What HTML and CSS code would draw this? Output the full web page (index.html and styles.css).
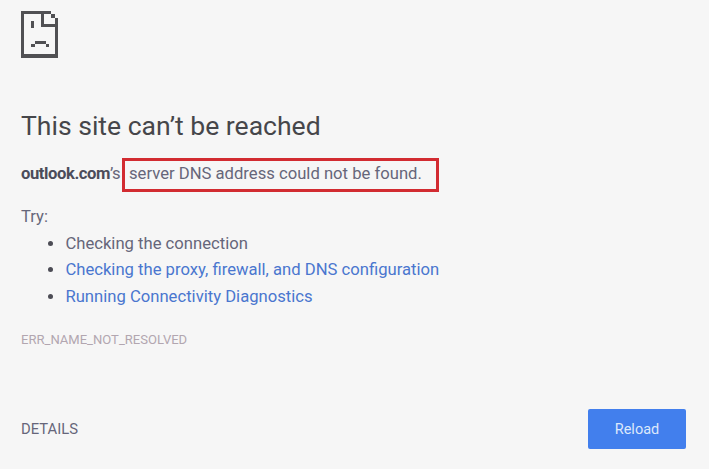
FILE: index.html
```html
<!DOCTYPE html>
<html lang="en">
<head>
<meta charset="utf-8">
<title>outlook.com</title>
<link rel="stylesheet" href="styles.css">
</head>
<body>
<main class="error-page">
<svg class="sad-page" viewBox="0 0 37 47" width="37" height="47" fill="#505053" shape-rendering="crispEdges"><path d="M0 0H30V3H23V13H34V7H37V47H0ZM3 3V43H34V16H20V3ZM30 3H34V7H30ZM10 10H13V17H10ZM14 30H25V33H14ZM10 33H14V36H10ZM25 33H28V36H25Z" fill-rule="evenodd"/></svg>
<h1>This site can’t be reached</h1>
<p class="summary"><span class="host"><strong>outlook.com</strong>’s</span><span class="highlight">server DNS address could not be found.</span></p>
<p class="try">Try:</p>
<ul>
<li>Checking the connection</li>
<li><a href="#">Checking the proxy, firewall, and DNS configuration</a></li>
<li><a href="#">Running Connectivity Diagnostics</a></li>
</ul>
<p class="code">ERR_NAME_NOT_RESOLVED</p>
<footer><a class="details" href="#">DETAILS</a><button>Reload</button></footer>
</main>
</body>
</html>
```
FILE: styles.css
```css
* { box-sizing: border-box; }
body { margin: 0; background: #f6f6f6; color: #66667a; font: 16.65px/26.5px Roboto, sans-serif; }
.error-page { padding: 11px 23px 0 21px; }
.sad-page { display: block; }
h1 { margin: 48px 0 0; font-size: 26.55px; line-height: 40px; font-weight: 400; color: #46464a; }
p { margin: 0; }
.summary { display: flex; align-items: center; margin-top: 12px; height: 34px; }
.host { width: 101px; padding-bottom: 2px; white-space: nowrap; letter-spacing: -0.43px; }
strong { color: #4c4c5a; }
.highlight { width: 317px; height: 34px; padding-left: 4px; border: 3px solid #d22b31; line-height: 25px; white-space: nowrap; }
.try { margin-top: 12px; }
ul { margin: 0; padding-left: 44.4px; }
li::marker { color: #4c4c55; }
a { color: #4a76cf; text-decoration: none; }
.code { margin-top: 17px; font-size: 13.05px; color: #b2a6b0; }
footer { display: flex; justify-content: space-between; align-items: center; margin-top: 55px; }
.details { position: relative; top: 1px; color: #66667a; font-size: 14.8px; }
button { width: 98px; height: 40px; padding: 2px 0 0; border: 0; border-radius: 2px; background: #427fed; color: #dce8fb; font: 14.5px Roboto, sans-serif; }
```
